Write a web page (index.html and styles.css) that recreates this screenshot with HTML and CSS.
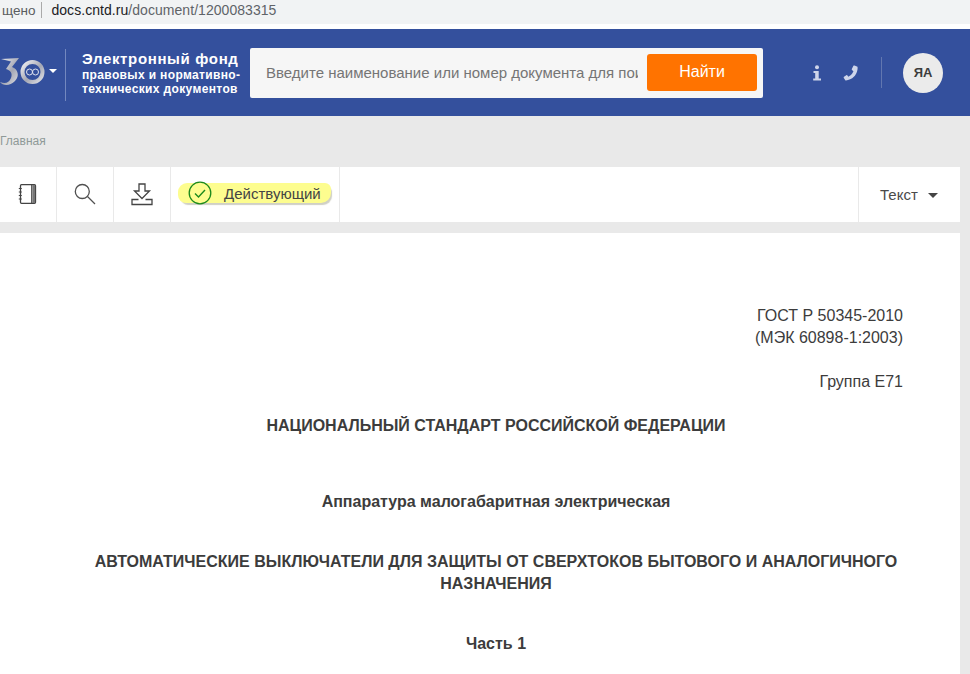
FILE: index.html
```html
<!DOCTYPE html>
<html lang="ru">
<head>
<meta charset="utf-8">
<title>ГОСТ Р 50345-2010</title>
<link rel="stylesheet" href="styles.css">
</head>
<body>
<div class="urlbar">
  <span class="secure">щено</span>
  <span class="urlsep"></span>
  <span class="url"><b>docs.cntd.ru</b>/document/1200083315</span>
</div>
<div class="urlgap"></div>
<header class="header">
  <div class="logo">
    <svg class="logo-img" width="46" height="30" viewBox="0 0 46 30">
      <defs><linearGradient id="g" x1="0" y1="0" x2="1" y2="1"><stop offset="0" stop-color="#f0f0f3"/><stop offset=".55" stop-color="#a4a7b4"/><stop offset="1" stop-color="#e0e1e6"/></linearGradient></defs>
      <path d="M1 1 L19 0 L12 9 C18 11 20 18 15 23 C10 28 3 28 0 24 C5 26 9 25 11 20 C13 15 10 12 6 11 L11 3.500 Z" fill="url(#g)"/>
      <circle cx="32.500" cy="14" r="10" fill="none" stroke="url(#g)" stroke-width="4"/>
      <circle cx="29.500" cy="14" r="3" fill="none" stroke="#dfe2ee" stroke-width="1"/>
      <circle cx="35.500" cy="14" r="3" fill="none" stroke="#dfe2ee" stroke-width="1"/>
    </svg>
    <span class="logo-caret"></span>
  </div>
  <div class="brand">
    <div class="brand-main">Электронный фонд</div>
    <div class="brand-sub">правовых и нормативно-<br>технических документов</div>
  </div>
  <form class="search">
    <div class="search-input">Введите наименование или номер документа для поиска</div>
    <div class="search-btn">Найти</div>
  </form>
  <div class="tools">
    <svg class="info" width="10" height="16" viewBox="0 0 10 16"><circle cx="5" cy="2.200" r="2" fill="#ced5ea"/><path d="M1.500 6h5.200v7.600H9v1.900H1.200v-1.900h2V7.900H1.500z" fill="#ced5ea"/></svg>
    <svg class="phone" width="16" height="16" viewBox="0 0 16 16"><path d="M11.500 0.500l3 1.200c.6 3-1 7.400-3.400 9.900-2.500 2.600-6 4-8.600 3.800L.8 13c-.3-.5-.2-1 .2-1.300l2.300-1.500c.4-.2.800-.1 1.100.2l1 1.300c1.800-.6 4.500-3.500 5-5.400L9 5c-.3-.3-.4-.7-.2-1.100l1.500-3c.2-.4.700-.5 1.200-.4z" fill="#ced5ea"/></svg>
    <span class="tools-sep"></span>
    <div class="avatar">ЯА</div>
  </div>
</header>
<div class="crumbs">Главная</div>
<nav class="toolbar">
  <div class="tb-btn">
    <svg width="20" height="22" viewBox="0 0 20 22" fill="none" stroke="#444" stroke-width="1.300"><rect x="2.500" y="1.700" width="15" height="18.600" rx="1"/><path d="M13.800 1.700v18.600"/><path d="M15.800 2v18" stroke-width="2.500" stroke="#777"/><path d="M.8 5.500h3M.8 9h3M.8 12.500h3M.8 16h3" stroke-width="1"/></svg>
  </div>
  <div class="tb-btn">
    <svg width="22" height="24" viewBox="0 0 22 24" fill="none" stroke="#505050" stroke-width="1.300"><circle cx="8.300" cy="9.500" r="7"/><path d="M13.500 14.500L21 22"/></svg>
  </div>
  <div class="tb-btn">
    <svg width="22" height="24" viewBox="0 0 22 24" fill="none" stroke="#444" stroke-width="1.300"><path d="M8 2h6v7h4.500L11 16.500 3.500 9H8z"/><path d="M7.500 17.500H1v5h20v-5h-6.500"/></svg>
  </div>
  <div class="tb-status">
    <div class="status-mark">
      <svg width="24" height="24" viewBox="0 0 24 24" fill="none" stroke="#1c8a1c"><circle cx="12" cy="12" r="10.800" stroke-width="1.300"/><path d="M7 12.500l3.500 3.500L17 9" stroke-width="1.400"/></svg>
      <span class="status-text">Действующий</span>
    </div>
  </div>
  <div class="tb-view"><span>Текст</span><i class="view-caret"></i></div>
</nav>
<main class="doc">
  <p class="right">ГОСТ Р 50345-2010<br>(МЭК 60898-1:2003)</p>
  <p class="right gap-line">Группа Е71</p>
  <p class="center gap-line">НАЦИОНАЛЬНЫЙ СТАНДАРТ РОССИЙСКОЙ ФЕДЕРАЦИИ</p>
  <p class="center gap-title">Аппаратура малогабаритная электрическая</p>
  <p class="center gap-part">АВТОМАТИЧЕСКИЕ ВЫКЛЮЧАТЕЛИ ДЛЯ ЗАЩИТЫ ОТ СВЕРХТОКОВ БЫТОВОГО И АНАЛОГИЧНОГО НАЗНАЧЕНИЯ</p>
  <p class="center gap-part">Часть 1</p>
</main>
</body>
</html>
```
FILE: styles.css
```css
* { box-sizing: border-box; }
html, body { margin: 0; padding: 0; height: 100%; overflow: hidden; }
body { background: #e9e9e9; font-family: "Liberation Sans", Arial, sans-serif; color: #3c3c3c; }

.urlbar { height: 24px; background: #f1f3f4; display: flex; align-items: center; font-size: 14px; color: #5f6368; padding-bottom: 4px; }
.secure { color: #5a5d60; margin-left: 2px; font-size: 13.5px; }
.urlsep { width: 1px; height: 16px; background: #aaa; margin: 0 9px 0 6px; }
.url { color: #5f6368; letter-spacing: 0.05px; }
.url b { font-weight: normal; color: #202124; }
.urlgap { height: 5px; background: #fff; }

.header { height: 87px; background: #34509d; display: flex; align-items: center; color: #fff; }
.logo { width: 66px; height: 52px; margin-top: 4px; flex: none; display: flex; align-items: center; border-right: 1px solid #7388bf; }
.logo-img { flex: none; margin-bottom: 4px; }
.logo-caret { margin: 0 0 8px 3px; border: 4px solid transparent; border-top: 4px solid #fff; border-bottom: 0; }
.brand { width: 168px; margin-left: 16px; flex: none; font-weight: bold; }
.brand-main { font-size: 15px; line-height: 18px; letter-spacing: 0.65px; }
.brand-sub { font-size: 12px; line-height: 14px; letter-spacing: 0.36px; }
.search { width: 513px; height: 50px; background: #f6f6f6; border-radius: 2px; display: flex; align-items: center; padding: 0 6px 0 16px; flex: none; }
.search-input { width: 372px; font-size: 15px; color: #757575; white-space: nowrap; overflow: hidden; }
.search-btn { margin-left: 9px; width: 110px; height: 37px; padding-bottom: 2px; background: #ff7300; border-radius: 3px; color: #fff; font-size: 16px; display: flex; align-items: center; justify-content: center; }
.tools { display: flex; align-items: center; margin-left: 49px; }
.info { flex: none; }
.phone { margin-left: 21px; flex: none; }
.tools-sep { width: 1px; height: 31px; background: #6277b0; margin: 0 21px 0 22px; }
.avatar { width: 40px; height: 40px; border-radius: 50%; background: #ebebeb; color: #3c3c3c; font-size: 13px; font-weight: bold; display: flex; align-items: center; justify-content: center; }

.crumbs { height: 51px; font-size: 12px; color: #8f9a98; padding-top: 18px; }

.toolbar { width: 960px; height: 55px; background: #fff; display: flex; }
.tb-btn { width: 57px; flex: none; display: flex; align-items: center; justify-content: center; border-right: 1px solid #e9e9e9; padding-bottom: 2px; }
.tb-status { width: 169px; flex: none; border-right: 1px solid #e9e9e9; padding: 16px 0 0 7px; }
.status-mark { width: 153px; height: 20px; background: #fdfd8f; border-radius: 9px 6px 10px 8px; box-shadow: 2px 3px 1px -1px rgba(120,120,90,.35); display: flex; align-items: center; font-size: 15px; color: #444; padding-left: 10px; }
.status-mark svg { flex: none; }
.status-text { margin-left: 12px; }
.tb-view { margin-left: auto; width: 102px; flex: none; border-left: 1px solid #e9e9e9; display: flex; align-items: center; font-size: 15px; color: #4a4a4a; padding-left: 21px; }
.view-caret { margin-left: 10px; border: 5px solid transparent; border-top: 5px solid #444; border-bottom: 0; margin-top: 2px; }

.doc { width: 960px; height: 460px; margin-top: 11px; background: #fff; padding: 72px 57px 0 89px; font-size: 16px; line-height: 22px; color: #3c3c3c; }
.doc p { margin: 0; }
.right { text-align: right; }
.center { text-align: center; font-weight: bold; }
.doc .gap-line { margin-top: 22px; }
.doc .gap-title { margin-top: 54px; }
.doc .gap-part { margin-top: 38px; }
```
